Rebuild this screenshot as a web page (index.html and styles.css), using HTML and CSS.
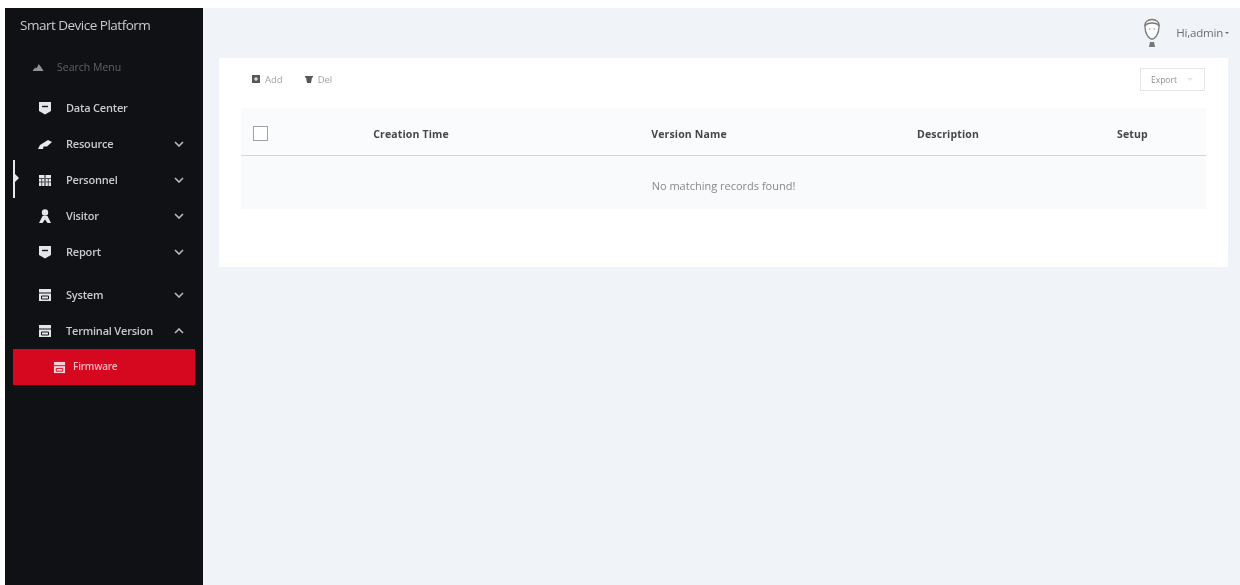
FILE: index.html
```html
<!DOCTYPE html>
<html lang="en">
<head>
    <meta charset="UTF-8">
    <meta name="viewport" content="width=device-width, initial-scale=1.0">
    <title>Firmware</title>
    <link rel="stylesheet" href="styles.css">
</head>
<body>
    <div class="app">
        <aside class="sidebar">
            <div class="brand">Smart Device Platform</div>
            <div class="search">
                <svg class="search-icon" viewBox="0 0 16 10"><path d="M0 10 L4 5 L6 6 L9 0 L12 4 L16 10 Z" fill="#8f9295"/></svg>
                <span>Search Menu</span>
            </div>
            <ul class="menu">
                <li class="menu-item">
                    <svg class="icon" viewBox="0 0 14 14"><path d="M1 1 H13 V10 L7 13.500 L1 10 Z" fill="#e4e6e8"/><path d="M4 5.500 H10" stroke="#15171b" stroke-width="1.400"/></svg>
                    <span class="label">Data Center</span>
                </li>
                <li class="menu-item">
                    <svg class="icon" viewBox="0 0 14 14"><path d="M0 12 L2 8 L10 3 L14 5 L9 9.500 L5.500 9.500 L5 12 Z" fill="#e8eaec"/></svg>
                    <span class="label">Resource</span>
                    <svg class="chevron" viewBox="0 0 10 6"><path d="M1 1 L5 5 L9 1" fill="none" stroke="#b8babc" stroke-width="1.600"/></svg>
                </li>
                <li class="menu-item">
                    <svg class="icon" viewBox="0 0 14 14"><path d="M1 2 H6.500 V13 H1 Z M7.500 2 H13 V13 H7.500 Z" fill="#e4e6e8"/><path d="M1 5.500 H6.500 M7.500 5.500 H13 M1 9 H6.500 M7.500 9 H13 M3.700 5.500 V13 M10.300 5.500 V13" stroke="#15171b" stroke-width="0.700"/></svg>
                    <span class="label">Personnel</span>
                    <svg class="chevron" viewBox="0 0 10 6"><path d="M1 1 L5 5 L9 1" fill="none" stroke="#b8babc" stroke-width="1.600"/></svg>
                </li>
                <li class="menu-item">
                    <svg class="icon" viewBox="0 0 14 14"><circle cx="7" cy="3.500" r="3.200" fill="#e4e6e8"/><path d="M4.500 7 H9.500 L13 14 H9.500 L7 10.500 L4.500 14 H1 Z" fill="#e4e6e8"/></svg>
                    <span class="label">Visitor</span>
                    <svg class="chevron" viewBox="0 0 10 6"><path d="M1 1 L5 5 L9 1" fill="none" stroke="#b8babc" stroke-width="1.600"/></svg>
                </li>
                <li class="menu-item">
                    <svg class="icon" viewBox="0 0 14 14"><path d="M1 1 H13 V10 L7 13.500 L1 10 Z" fill="#e4e6e8"/><path d="M4 5.500 H10" stroke="#15171b" stroke-width="1.400"/></svg>
                    <span class="label">Report</span>
                    <svg class="chevron" viewBox="0 0 10 6"><path d="M1 1 L5 5 L9 1" fill="none" stroke="#b8babc" stroke-width="1.600"/></svg>
                </li>
                <li class="menu-item spaced">
                    <svg class="icon" viewBox="0 0 14 14"><path d="M1 1 H13 V13 H1 Z" fill="#e4e6e8"/><path d="M1 5 H13 M3.500 8 H10.500 V11 H3.500 Z" fill="none" stroke="#15171b" stroke-width="1"/></svg>
                    <span class="label">System</span>
                    <svg class="chevron" viewBox="0 0 10 6"><path d="M1 1 L5 5 L9 1" fill="none" stroke="#b8babc" stroke-width="1.600"/></svg>
                </li>
                <li class="menu-item">
                    <svg class="icon" viewBox="0 0 14 14"><path d="M1 1 H13 V13 H1 Z" fill="#e4e6e8"/><path d="M1 5 H13 M3.500 8 H10.500 V11 H3.500 Z" fill="none" stroke="#15171b" stroke-width="1"/></svg>
                    <span class="label">Terminal Version</span>
                    <svg class="chevron" viewBox="0 0 10 6"><path d="M1 5 L5 1 L9 5" fill="none" stroke="#b8babc" stroke-width="1.600"/></svg>
                </li>
                <li class="menu-item active">
                    <svg class="icon" viewBox="0 0 14 14"><path d="M1 1 H13 V13 H1 Z" fill="#f8d0d5"/><path d="M1 5 H13 M3.500 8 H10.500 V11 H3.500 Z" fill="none" stroke="#d5081f" stroke-width="1"/></svg>
                    <span class="label">Firmware</span>
                </li>
            </ul>
        </aside>

        <main class="content">
            <header class="topbar">
                <svg class="avatar" viewBox="0 0 20 32">
                    <path d="M3 11 C1 1 19 1 17 11 C17 18 13 23 10 23 C7 23 3 18 3 11 Z" fill="#fbfbfb" stroke="#77797c" stroke-width="1.300"/>
                    <path d="M3 10 C5 6 15 6 17 10" fill="none" stroke="#77797c" stroke-width="1.300"/>
                    <path d="M7 13 H8.500 M11.500 13 H13" stroke="#8b8e91" stroke-width="1"/>
                    <path d="M8 26 H12 L13 31 H7 Z" fill="#77797c"/>
                </svg>
                <span class="user">Hi,admin</span>
                <span class="caret"></span>
            </header>

            <section class="card">
                <div class="toolbar">
                    <button class="tool">
                        <svg class="tool-icon" viewBox="0 0 8 8"><path d="M0 0 H8 V8 H0 Z" fill="#55585b"/><path d="M2 4 H6 M4 2 V6" stroke="#fff" stroke-width="1"/></svg>
                        Add
                    </button>
                    <button class="tool">
                        <svg class="tool-icon" viewBox="0 0 8 8"><path d="M0 1 H8 V2.500 H7 L6 8 H2 L1 2.500 H0 Z" fill="#55585b"/></svg>
                        Del
                    </button>
                    <button class="export">Export<span class="export-caret"></span></button>
                </div>
                <table class="grid">
                    <thead>
                        <tr>
                            <th class="check-col"><span class="checkbox"></span></th>
                            <th class="time-col">Creation Time</th>
                            <th class="name-col">Version Name</th>
                            <th class="desc-col">Description</th>
                            <th>Setup</th>
                        </tr>
                    </thead>
                    <tbody>
                        <tr>
                            <td colspan="5">No matching records found!</td>
                        </tr>
                    </tbody>
                </table>
            </section>
        </main>
    </div>
</body>
</html>
```

FILE: styles.css
```css
*, *::before, *::after{
    box-sizing: border-box;
}
html, body{
    height: 100%;
}
body{
    margin: 0;
    padding: 8px 0 0 5px;
    background: #fff;
    overflow: hidden;
    font-family: "Open Sans", "Noto Sans", sans-serif;
}
.app{
    display: flex;
    height: 100%;
    filter: blur(0.5px);
}

/* sidebar */
.sidebar{
    position: relative;
    flex: none;
    width: 198px;
    padding: 0 8px;
    background: #0f1114;
    color: #dcdee0;
}
.sidebar::before{
    content: "";
    position: absolute;
    left: 8px;
    top: 152px;
    width: 1.500px;
    height: 38px;
    background: #e8e8e8;
}
.sidebar::after{
    content: "";
    position: absolute;
    left: 9px;
    top: 165px;
    border: 5px solid transparent;
    border-left-color: #e8e8e8;
}
.brand{
    height: 34px;
    padding-left: 7px;
    line-height: 34px;
    font-size: 13.500px;
    letter-spacing: -0.5px;
    color: #c9cbcd;
    white-space: nowrap;
}
.search{
    display: flex;
    align-items: center;
    height: 48px;
    padding: 2px 0 0 19px;
    font-size: 10.500px;
    color: #5f6367;
}
.search-icon{
    width: 12px;
    height: 7px;
    margin-right: 13px;
}
.menu{
    margin: 0;
    padding: 0;
    list-style: none;
}
.menu-item{
    display: flex;
    align-items: center;
    height: 36px;
    padding-left: 25px;
    font-size: 11px;
    font-weight: 600;
    color: #c8cacc;
    letter-spacing: -0.2px;
}
.menu-item.spaced{
    margin-top: 7px;
}
.menu-item.active{
    padding-left: 40px;
    background: #d5081f;
    color: #f3b6bd;
    font-size: 10px;
}
.icon{
    flex: none;
    width: 14px;
    height: 14px;
    margin-right: 14px;
}
.active .icon{
    width: 13px;
    height: 13px;
    margin-right: 7px;
}
.label{
    flex: 1;
    padding-bottom: 2px;
    white-space: nowrap;
}
.chevron{
    flex: none;
    width: 10px;
    height: 6px;
    margin-right: 11px;
}

/* main area */
.content{
    flex: 1;
    min-width: 0;
    padding: 0 12px 0 16px;
    background: #f0f3f7;
}
.topbar{
    display: flex;
    align-items: center;
    justify-content: flex-end;
    height: 50px;
    padding-bottom: 2px;
    color: #6c7074;
    font-size: 11.500px;
}
.avatar{
    width: 20px;
    height: 32px;
    margin-right: 14px;
}
.user{
    letter-spacing: -0.2px;
}
.caret{
    margin: 2px -1px 0 2px;
    border: 2.500px solid transparent;
    border-top-color: #6c7074;
    border-bottom: none;
}
.card{
    height: 209px;
    padding: 0 22px;
    background: #fff;
}
.toolbar{
    display: flex;
    align-items: center;
    gap: 22px;
    height: 42px;
    margin-bottom: 8px;
    padding-left: 11px;
}
.tool{
    display: flex;
    align-items: center;
    gap: 5px;
    padding: 0;
    border: none;
    background: none;
    color: #a0a3a6;
    font: inherit;
    font-size: 9.500px;
}
.tool-icon{
    width: 8px;
    height: 8px;
}
.export{
    display: flex;
    align-items: center;
    width: 65px;
    height: 23px;
    margin: 0 1px 0 auto;
    padding: 0 0 0 10px;
    border: 1px solid #e4e6e8;
    background: #fff;
    color: #8e9194;
    font: inherit;
    font-size: 8.500px;
}
.export-caret{
    margin-left: 10px;
    border: 3px solid transparent;
    border-top-color: #e2e4e6;
    border-bottom: none;
}
.grid{
    width: 100%;
    table-layout: fixed;
    border-collapse: collapse;
    font-size: 10.500px;
    letter-spacing: 0.15px;
}
.grid th{
    height: 47px;
    padding: 5px 0 0;
    border-bottom: 1px solid #d3d6d8;
    background: #fafbfc;
    color: #44474a;
    font-weight: 700;
    text-align: center;
}
.grid td{
    height: 54px;
    padding: 6px 0 0;
    background: #f9fafb;
    color: #85888c;
    font-size: 11px;
    letter-spacing: 0;
    text-align: center;
}
.check-col{
    width: 40px;
}
.time-col{
    width: 260px;
}
.name-col{
    width: 296px;
}
.desc-col{
    width: 222px;
}
.checkbox{
    display: block;
    width: 15px;
    height: 15px;
    margin-left: 12px;
    border: 1px solid #a0a3a6;
    background: #fff;
}
```
